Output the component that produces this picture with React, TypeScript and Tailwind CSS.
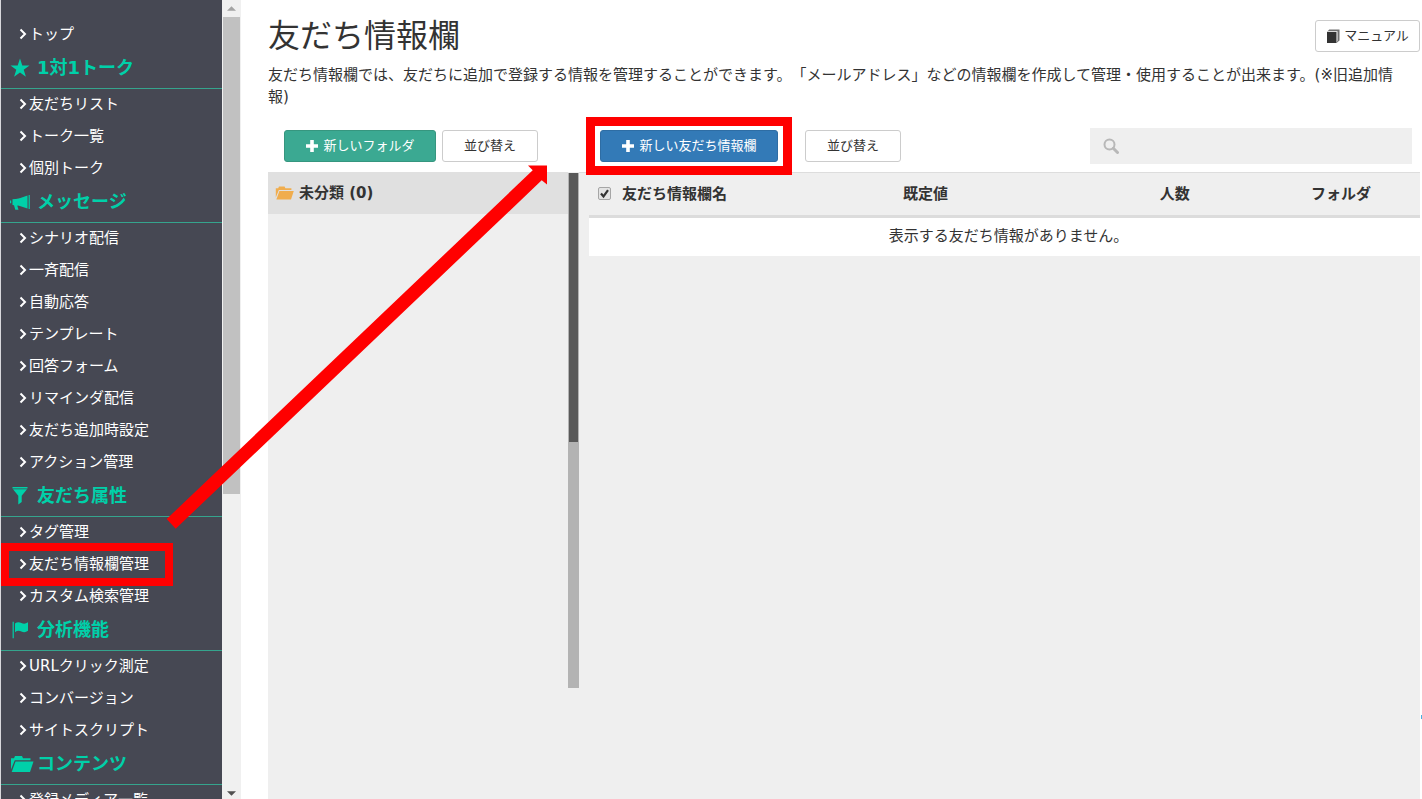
import React from 'react';

type IconProps = { className?: string };

const StarIcon = ({ className }: IconProps) => (
  <svg viewBox="0 0 20 20" className={className} fill="currentColor" aria-hidden="true">
    <path d="M10 .5l2.3 6.900h7.200l-5.800 4.300 2.200 7L10 14.500l-5.900 4.200 2.200-7L.5 7.400h7.200z" />
  </svg>
);

const MegaphoneIcon = ({ className }: IconProps) => (
  <svg viewBox="0 0 20 20" className={className} fill="currentColor" aria-hidden="true">
    <path d="M18.600 3h1.200v14h-1.200zM17.500 3.500v13L9 13.800v-7.200zM2.500 7.200L8 6.800v6.800l-.8-.1 1.300 4.200H5.300L4 13.200l-1.500-.2zM0 8.500h1.200v2.800H0z" />
    <path d="M7.500 6.800l2-.5v7.500l-2-.3z" />
  </svg>
);

const FilterIcon = ({ className }: IconProps) => (
  <svg viewBox="0 0 20 20" className={className} fill="currentColor" aria-hidden="true">
    <path d="M2.500 1h15v1.400h-15zM3 3.300h14l-5.300 6.500V16l-3.400 2.600V9.800z" />
  </svg>
);

const FlagIcon = ({ className }: IconProps) => (
  <svg viewBox="0 0 20 20" className={className} fill="currentColor" aria-hidden="true">
    <path d="M2.600 1.800h1.200v16.400H2.600zM5 3.600c2-1.700 4.200-1.700 6.400-.6 2.200 1 4.300.9 6.600-.7v8.500c-2.300 1.700-4.400 1.700-6.600.7-2.200-1-4.400-.9-6.400.8z" />
  </svg>
);

const FolderIcon = ({ className }: IconProps) => (
  <svg viewBox="-2 0 24 20" className={className} fill="currentColor" overflow="visible" aria-hidden="true">
    <path d="M1 15.500V4.200h3L5 2h7l1 2.200h7.500v2H4.800z" />
    <path d="M5.500 7.500h18L20 18H1.700z" />
  </svg>
);

const PlusIcon = ({ className }: IconProps) => (
  <svg viewBox="0 0 14 14" className={className} fill="currentColor" aria-hidden="true">
    <path d="M5.200 1h3.600v4.200H13v3.600H8.800V13H5.200V8.800H1V5.200h4.200z" />
  </svg>
);

const BookIcon = ({ className }: IconProps) => (
  <svg viewBox="0 0 14 14" className={className} fill="currentColor" aria-hidden="true">
    <path d="M1 3h9.500v11H1z" />
    <path d="M1 3L3.200.5h10.300v11L10.500 14l1-2.500V2.200H2.500z" opacity=".7" />
  </svg>
);

const SearchIcon = ({ className }: IconProps) => (
  <svg viewBox="0 0 16 16" className={className} fill="none" stroke="currentColor" aria-hidden="true">
    <circle cx="6.500" cy="6.500" r="5" strokeWidth="2" />
    <path d="M10.300 10.300l4.200 4.200" strokeWidth="3" strokeLinecap="round" />
  </svg>
);

const ChevronIcon = ({ className }: IconProps) => (
  <svg viewBox="0 0 8 12" className={className} fill="none" stroke="currentColor" strokeWidth="2" aria-hidden="true">
    <path d="M1.500 1.500L6 6l-4.500 4.500" />
  </svg>
);

const groups = [
  { title: '1対1トーク', icon: StarIcon, items: ['友だちリスト', 'トーク一覧', '個別トーク'] },
  {
    title: 'メッセージ',
    icon: MegaphoneIcon,
    items: ['シナリオ配信', '一斉配信', '自動応答', 'テンプレート', '回答フォーム', 'リマインダ配信', '友だち追加時設定', 'アクション管理'],
  },
  { title: '友だち属性', icon: FilterIcon, items: ['タグ管理', '友だち情報欄管理', 'カスタム検索管理'] },
  { title: '分析機能', icon: FlagIcon, items: ['URLクリック測定', 'コンバージョン', 'サイトスクリプト'] },
  { title: 'コンテンツ', icon: FolderIcon, items: ['登録メディア一覧'] },
];

const highlighted = '友だち情報欄管理';

function NavItem({ label }: { label: string }) {
  return (
    <li className="relative">
      <a href="#" className="flex h-8 items-center gap-0.5 pb-0.5 pl-[18px] text-[15px] text-white">
        <ChevronIcon className="h-3 w-2" />
        {label}
      </a>
      {label === highlighted && (
        <span className="pointer-events-none absolute -top-1.5 left-0 h-[43px] w-[172px] border-8 border-[#ff0000]"></span>
      )}
    </li>
  );
}

function Sidebar() {
  return (
    <aside className="flex w-[241px] shrink-0 border-l border-[#d8d8dc]">
      <nav className="min-w-0 flex-1 overflow-hidden bg-[#464853] pt-[19px]">
        <ul>
          <NavItem label="トップ" />
        </ul>
        {groups.map((group) => (
          <section key={group.title}>
            <h2 className="flex h-[38px] items-center gap-[5px] border-b border-[#35a48d] pb-1 pl-[7px] text-[18px] font-bold text-[#00d0a9]">
              <group.icon className="h-5 w-6" />
              {group.title}
            </h2>
            <ul>
              {group.items.map((item) => (
                <NavItem key={item} label={item} />
              ))}
            </ul>
          </section>
        ))}
      </nav>

      {/* Scrollbar */}
      <div className="flex w-[19px] flex-col items-center bg-[#f0f0f0]">
        <span className="flex h-[17px] shrink-0 items-center">
          <svg viewBox="0 0 10 5" className="h-[5px] w-[9px]" fill="#a3a3a3" aria-hidden="true">
            <path d="M5 0l5 5H0z" />
          </svg>
        </span>
        <div className="flex w-full flex-1 flex-col px-px">
          <span className="h-[62%] bg-[#c1c1c1]"></span>
        </div>
        <span className="flex h-3 shrink-0 items-center">
          <svg viewBox="0 0 10 5" className="h-[5px] w-[9px]" fill="#505050" aria-hidden="true">
            <path d="M0 0h10L5 5z" />
          </svg>
        </span>
      </div>
    </aside>
  );
}

const buttonBase = 'flex h-8 items-center justify-center gap-1 rounded-[3px] border text-[13px]';

function FolderPanel() {
  return (
    <section className="flex w-[311px] shrink-0 flex-col">
      <div className="flex h-[44px] items-start gap-1.5 pl-4 pt-0.5">
        <button className={`${buttonBase} w-[152px] border-[#36967f] bg-[#3ba992] text-white`}>
          <PlusIcon className="h-3.5 w-3.5" />
          新しいフォルダ
        </button>
        <button className={`${buttonBase} w-24 border-[#ccc] bg-white text-[#333]`}>並び替え</button>
      </div>
      <div className="flex flex-1 bg-[#efefef]">
        <div className="flex-1">
          <a href="#" className="flex h-[42px] items-center gap-1.5 bg-[#e0e0e0] pl-[5px] text-[15px] font-bold text-[#333]">
            <FolderIcon className="h-4 w-5 text-[#f0ad4e]" />
            未分類 (0)
          </a>
        </div>
        <div className="mt-px h-[515px] w-[11px] bg-[#b3b3b3] px-px">
          <div className="h-[269px] bg-[#595959]"></div>
        </div>
      </div>
    </section>
  );
}

function FieldPanel() {
  return (
    <section className="flex min-w-0 flex-1 flex-col">
      <div className="flex h-[44px] items-start pl-[21px] pr-2">
        <div className="relative mt-0.5">
          <button className={`${buttonBase} w-[178px] border-[#2e6da4] bg-[#337ab7] text-white`}>
            <PlusIcon className="h-3.5 w-3.5" />
            新しい友だち情報欄
          </button>
          <span className="pointer-events-none absolute -inset-x-3.5 -inset-y-[13px] z-10 border-[9px] border-[#ff0000]"></span>
        </div>
        <button className={`${buttonBase} ml-[27px] mt-0.5 w-24 border-[#ccc] bg-white text-[#333]`}>並び替え</button>
        <label className="ml-auto flex h-9 w-[322px] items-center bg-[#efefef] pl-[13px] text-[#b8b8b8]">
          <SearchIcon className="h-4 w-4" />
          <input type="search" aria-label="検索" className="min-w-0 flex-1 bg-transparent px-2 text-[15px] text-[#333] outline-none" />
        </label>
      </div>
      <div className="flex-1 border-t border-[#ddd] bg-[#efefef] pl-2.5">
        <table className="w-full table-fixed border-collapse text-[15px] text-[#333]">
          <colgroup>
            <col className="w-[21%]" />
            <col className="w-[39%]" />
            <col className="w-[21%]" />
            <col className="w-[19%]" />
          </colgroup>
          <thead>
            <tr className="h-[43px] border-b-[3px] border-[#dcdcdc]">
              <th className="pl-[9px] text-left">
                <label className="flex items-center gap-[11px] whitespace-nowrap">
                  <span className="relative flex h-[13px] w-[13px]">
                    <input
                      type="checkbox"
                      defaultChecked
                      className="h-[13px] w-[13px] appearance-none rounded-[2px] border border-[#a6a6a6] bg-[#e4e4e4]"
                    />
                    <svg viewBox="0 0 13 13" className="pointer-events-none absolute inset-0" fill="none" stroke="#333" strokeWidth="2.2" aria-hidden="true">
                      <path d="M3 6.500l2.500 3L10 3.200" />
                    </svg>
                  </span>
                  友だち情報欄名
                </label>
              </th>
              <th>既定値</th>
              <th>人数</th>
              <th>フォルダ</th>
            </tr>
          </thead>
          <tbody>
            <tr className="h-10 bg-white">
              <td colSpan={4} className="pb-0.5 pl-2 text-center">表示する友だち情報がありません。</td>
            </tr>
          </tbody>
        </table>
      </div>
    </section>
  );
}

export default function App() {
  return (
    <div className="relative flex h-screen overflow-hidden bg-white font-['DejaVu_Sans','Noto_Sans_CJK_JP',sans-serif] text-[#333]">
      <Sidebar />
      <main className="flex min-w-0 flex-1 flex-col pl-[27px] pr-0.5">
        <header className="flex items-start justify-between pt-3">
          <h1 className="text-[32px] font-normal leading-[48px]">友だち情報欄</h1>
          <button className={`${buttonBase} mt-2 w-[105px] border-[#ccc] bg-white text-[#333]`}>
            <BookIcon className="h-3.5 w-3.5" />
            マニュアル
          </button>
        </header>
        <p className="mt-1 pr-2 text-[15px] leading-[22px] [text-spacing-trim:space-all]">
          友だち情報欄では、友だちに追加で登録する情報を管理することができます。「メールアドレス」などの情報欄を作成して管理・使用することが出来ます。(※旧追加情報)
        </p>
        <div className="mt-5 flex flex-1">
          <FolderPanel />
          <FieldPanel />
        </div>
      </main>

      {/* Arrow from the menu entry to the create button */}
      <svg viewBox="0 0 390 366" className="pointer-events-none absolute left-[160px] top-[165px] h-[366px] w-[390px]" fill="#ff0000" aria-hidden="true">
        <path d="M368 .5h19V19.500L381.700 15.300 15.700 363.700 6.700 354 372.700 5.300z" />
      </svg>

      {/* Edge of the collapsed chat widget */}
      <span className="absolute right-0 top-[715px] h-1 w-px bg-[#4ab0e0]"></span>
    </div>
  );
}
